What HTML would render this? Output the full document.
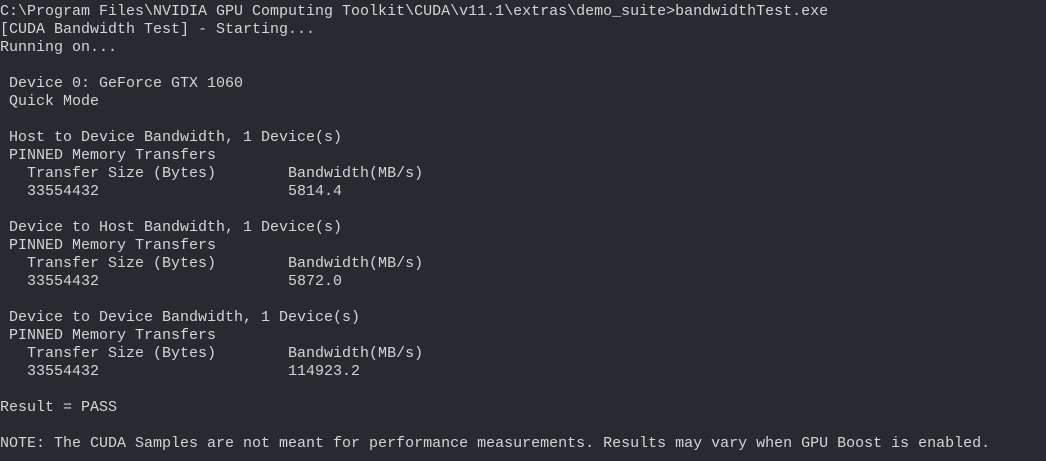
<!DOCTYPE html>
<html><head><meta charset="utf-8"><style>
html,body{margin:0;padding:0;background:#272b30;width:1046px;height:461px;overflow:hidden}
pre{margin:0;padding:3px 0 0 0;font-family:"Liberation Mono",monospace;font-size:15px;line-height:18px;color:#d4d4d4;white-space:pre}
</style></head><body><pre>C:\Program Files\NVIDIA GPU Computing Toolkit\CUDA\v11.1\extras\demo_suite>bandwidthTest.exe
[CUDA Bandwidth Test] - Starting...
Running on...

 Device 0: GeForce GTX 1060
 Quick Mode

 Host to Device Bandwidth, 1 Device(s)
 PINNED Memory Transfers
   Transfer Size (Bytes)        Bandwidth(MB/s)
   33554432                     5814.4

 Device to Host Bandwidth, 1 Device(s)
 PINNED Memory Transfers
   Transfer Size (Bytes)        Bandwidth(MB/s)
   33554432                     5872.0

 Device to Device Bandwidth, 1 Device(s)
 PINNED Memory Transfers
   Transfer Size (Bytes)        Bandwidth(MB/s)
   33554432                     114923.2

Result = PASS

NOTE: The CUDA Samples are not meant for performance measurements. Results may vary when GPU Boost is enabled.</pre></body></html>
